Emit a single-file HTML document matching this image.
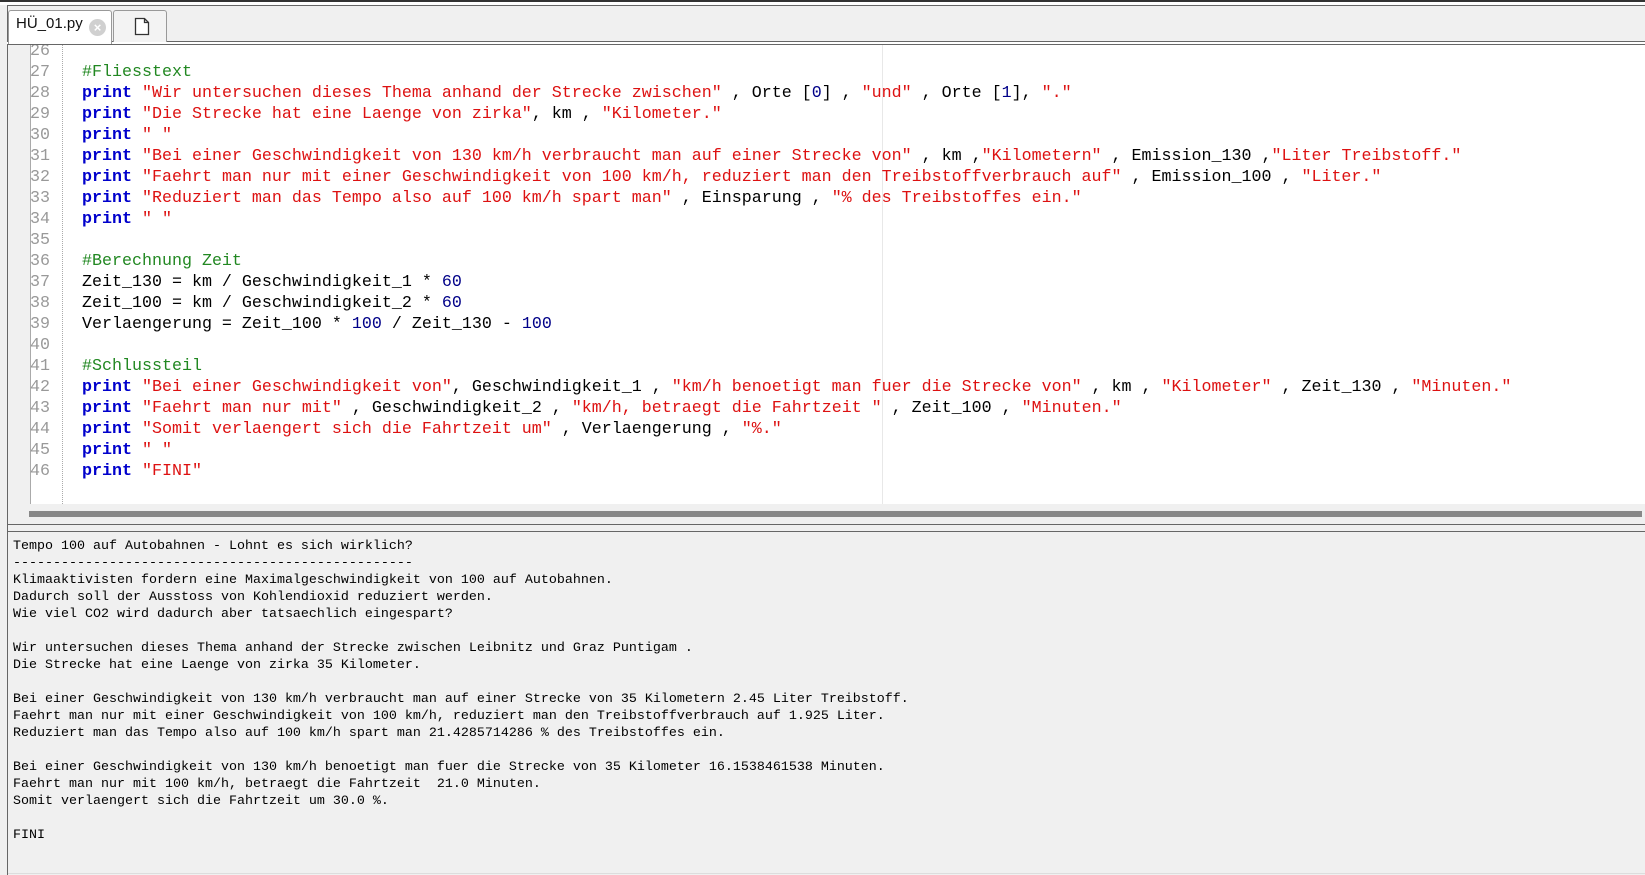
<!DOCTYPE html>
<html><head><meta charset="utf-8"><style>
body{margin:0;width:1645px;height:875px;overflow:hidden;background:#f0f0f0;position:relative;font-family:"Liberation Sans",sans-serif}
.a{position:absolute}
.code{position:absolute;left:0;top:40px;font-family:"Liberation Mono",monospace;font-size:16.67px;line-height:21px;white-space:pre;color:#000}
.ln{position:absolute;left:30px;width:30px;color:#999}
.t{position:absolute;left:82px}
.k{color:#0000cc;font-weight:bold}.s{color:#dd1111}.c{color:#228822}.n{color:#000088}
.out{position:absolute;left:13px;top:538px;font-family:"Liberation Mono",monospace;font-size:13.33px;line-height:17px;white-space:pre;color:#000}
</style></head><body>
<div class="a" style="left:0;top:0;width:1645px;height:2px;background:#333"></div>
<div class="a" style="left:0;top:2px;width:1645px;height:3px;background:#fff"></div>
<div class="a" style="left:7px;top:5px;width:1638px;height:1px;background:#666"></div>
<div class="a" style="left:7px;top:5px;width:1px;height:870px;background:#666"></div>
<div class="a" style="left:7px;top:41px;width:1638px;height:1px;background:#666"></div>
<div class="a" style="left:7px;top:42px;width:1638px;height:2px;background:#fff"></div>
<div class="a" style="left:7px;top:44px;width:1638px;height:1px;background:#666"></div>
<div class="a" style="left:8px;top:10px;width:104px;height:34px;background:#fff;border:1px solid #999;border-bottom:none;border-radius:3px 3px 0 0;box-sizing:border-box"></div>
<div class="a" style="left:16px;top:15px;font-size:15px;color:#111">HÜ_01.py</div>
<div class="a" style="left:89px;top:19px;width:17px;height:17px;border-radius:50%;background:#d0d0d0;color:#fff;font-size:13px;line-height:17px;text-align:center;font-weight:bold">×</div>
<div class="a" style="left:113px;top:10px;width:54px;height:32px;background:#f3f3f3;border:1px solid #999;border-bottom:none;border-radius:3px 3px 0 0;box-sizing:border-box"></div>
<svg class="a" style="left:134px;top:17px" width="16" height="19"><path d="M1.5 1.5h9l4 4v12h-13z M10.5 1.5v4h4" fill="#fff" stroke="#333" stroke-width="1.3"/></svg>
<div class="a" style="left:8px;top:45px;width:1637px;height:459px;background:#fff;overflow:hidden">
<div class="a" style="left:0;top:0;width:22px;height:459px;background:#f0f0f0"></div>
<div class="a" style="left:22px;top:0;width:1px;height:459px;background:#aaa"></div>
<div class="a" style="left:54px;top:0;width:0;height:459px;border-left:1px dotted #aaa"></div>
<div class="a" style="left:874px;top:0;width:1px;height:459px;background:#e8e8e8"></div>
<div class="code" style="top:-4px;left:-8px">
<div class="ln" style="top:0">26</div>
<div class="ln" style="top:21px">27</div><div class="t c" style="top:21px">#Fliesstext</div>
<div class="ln" style="top:42px">28</div><div class="t" style="top:42px"><span class="k">print</span> <span class="s">"Wir untersuchen dieses Thema anhand der Strecke zwischen"</span> , Orte [<span class="n">0</span>] , <span class="s">"und"</span> , Orte [<span class="n">1</span>], <span class="s">"."</span></div>
<div class="ln" style="top:63px">29</div><div class="t" style="top:63px"><span class="k">print</span> <span class="s">"Die Strecke hat eine Laenge von zirka"</span>, km , <span class="s">"Kilometer."</span></div>
<div class="ln" style="top:84px">30</div><div class="t" style="top:84px"><span class="k">print</span> <span class="s">" "</span></div>
<div class="ln" style="top:105px">31</div><div class="t" style="top:105px"><span class="k">print</span> <span class="s">"Bei einer Geschwindigkeit von 130 km/h verbraucht man auf einer Strecke von"</span> , km ,<span class="s">"Kilometern"</span> , Emission_130 ,<span class="s">"Liter Treibstoff."</span></div>
<div class="ln" style="top:126px">32</div><div class="t" style="top:126px"><span class="k">print</span> <span class="s">"Faehrt man nur mit einer Geschwindigkeit von 100 km/h, reduziert man den Treibstoffverbrauch auf"</span> , Emission_100 , <span class="s">"Liter."</span></div>
<div class="ln" style="top:147px">33</div><div class="t" style="top:147px"><span class="k">print</span> <span class="s">"Reduziert man das Tempo also auf 100 km/h spart man"</span> , Einsparung , <span class="s">"% des Treibstoffes ein."</span></div>
<div class="ln" style="top:168px">34</div><div class="t" style="top:168px"><span class="k">print</span> <span class="s">" "</span></div>
<div class="ln" style="top:189px">35</div>
<div class="ln" style="top:210px">36</div><div class="t c" style="top:210px">#Berechnung Zeit</div>
<div class="ln" style="top:231px">37</div><div class="t" style="top:231px">Zeit_130 = km / Geschwindigkeit_1 * <span class="n">60</span></div>
<div class="ln" style="top:252px">38</div><div class="t" style="top:252px">Zeit_100 = km / Geschwindigkeit_2 * <span class="n">60</span></div>
<div class="ln" style="top:273px">39</div><div class="t" style="top:273px">Verlaengerung = Zeit_100 * <span class="n">100</span> / Zeit_130 - <span class="n">100</span></div>
<div class="ln" style="top:294px">40</div>
<div class="ln" style="top:315px">41</div><div class="t c" style="top:315px">#Schlussteil</div>
<div class="ln" style="top:336px">42</div><div class="t" style="top:336px"><span class="k">print</span> <span class="s">"Bei einer Geschwindigkeit von"</span>, Geschwindigkeit_1 , <span class="s">"km/h benoetigt man fuer die Strecke von"</span> , km , <span class="s">"Kilometer"</span> , Zeit_130 , <span class="s">"Minuten."</span></div>
<div class="ln" style="top:357px">43</div><div class="t" style="top:357px"><span class="k">print</span> <span class="s">"Faehrt man nur mit"</span> , Geschwindigkeit_2 , <span class="s">"km/h, betraegt die Fahrtzeit "</span> , Zeit_100 , <span class="s">"Minuten."</span></div>
<div class="ln" style="top:378px">44</div><div class="t" style="top:378px"><span class="k">print</span> <span class="s">"Somit verlaengert sich die Fahrtzeit um"</span> , Verlaengerung , <span class="s">"%."</span></div>
<div class="ln" style="top:399px">45</div><div class="t" style="top:399px"><span class="k">print</span> <span class="s">" "</span></div>
<div class="ln" style="top:420px">46</div><div class="t" style="top:420px"><span class="k">print</span> <span class="s">"FINI"</span></div>
</div>
</div>
<div class="a" style="left:8px;top:504px;width:1637px;height:20px;background:#f0f0f0"></div>
<div class="a" style="left:29px;top:511px;width:1613px;height:6px;background:#888"></div>
<div class="a" style="left:7px;top:524px;width:1638px;height:1px;background:#666"></div>
<div class="a" style="left:7px;top:531px;width:1638px;height:1px;background:#666"></div>
<div class="out">Tempo 100 auf Autobahnen - Lohnt es sich wirklich?
--------------------------------------------------
Klimaaktivisten fordern eine Maximalgeschwindigkeit von 100 auf Autobahnen.
Dadurch soll der Ausstoss von Kohlendioxid reduziert werden.
Wie viel CO2 wird dadurch aber tatsaechlich eingespart?

Wir untersuchen dieses Thema anhand der Strecke zwischen Leibnitz und Graz Puntigam .
Die Strecke hat eine Laenge von zirka 35 Kilometer.

Bei einer Geschwindigkeit von 130 km/h verbraucht man auf einer Strecke von 35 Kilometern 2.45 Liter Treibstoff.
Faehrt man nur mit einer Geschwindigkeit von 100 km/h, reduziert man den Treibstoffverbrauch auf 1.925 Liter.
Reduziert man das Tempo also auf 100 km/h spart man 21.4285714286 % des Treibstoffes ein.

Bei einer Geschwindigkeit von 130 km/h benoetigt man fuer die Strecke von 35 Kilometer 16.1538461538 Minuten.
Faehrt man nur mit 100 km/h, betraegt die Fahrtzeit  21.0 Minuten.
Somit verlaengert sich die Fahrtzeit um 30.0 %.

FINI</div>
<div class="a" style="left:8px;top:873px;width:1637px;height:1px;background:#ddd"></div>
</body></html>
